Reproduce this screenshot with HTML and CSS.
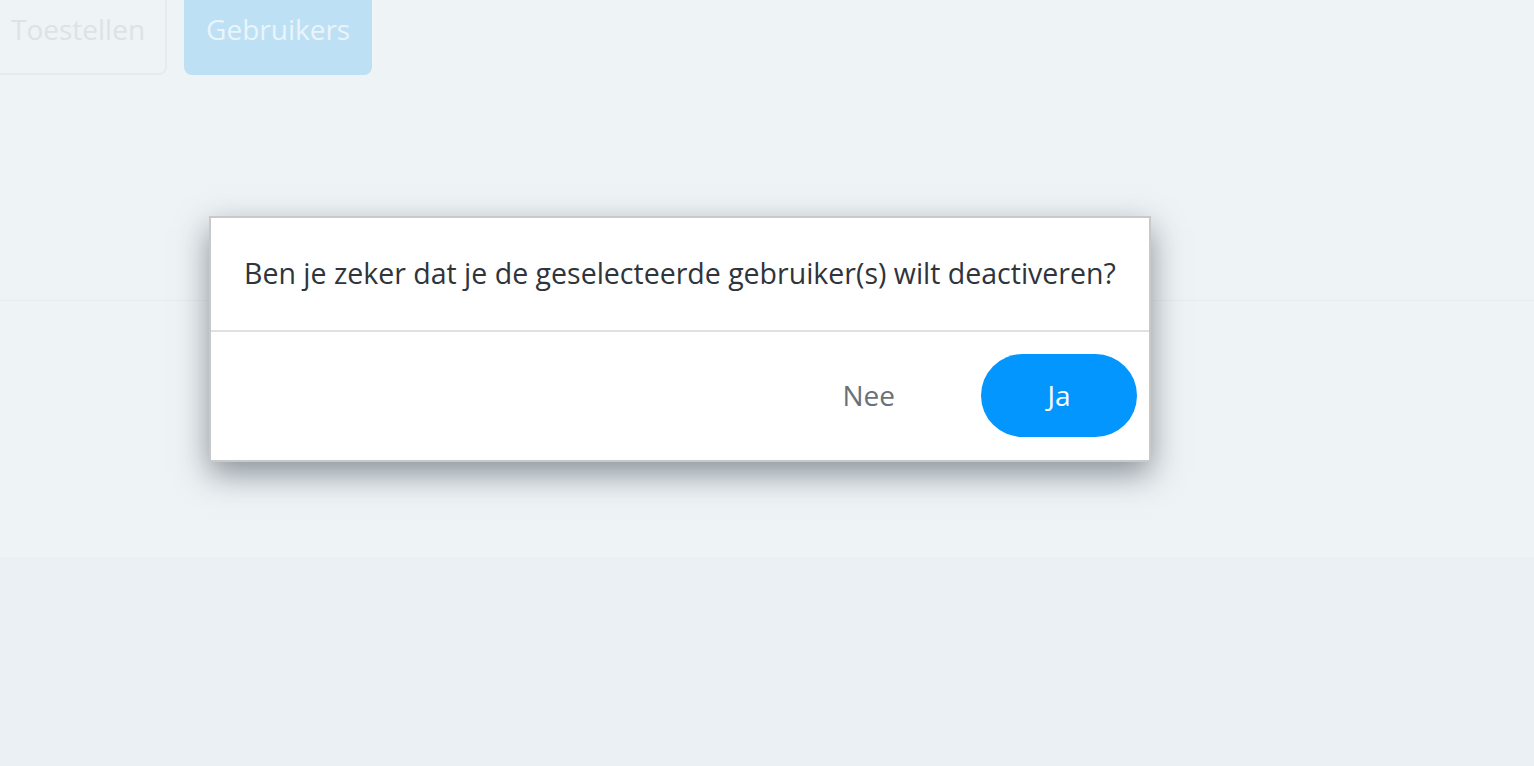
FILE: index.html
```html
<!DOCTYPE html>
<html lang="nl">
<head>
<meta charset="utf-8">
<title>Gebruikers deactiveren</title>
<link rel="stylesheet" href="styles.css">
</head>
<body>
<div class="page">
  <section class="top">
    <nav class="tabs">
      <button class="tab">Toestellen</button>
      <button class="tab tab-active">Gebruikers</button>
    </nav>
  </section>
  <section class="middle"></section>
  <section class="bottom"></section>
</div>
<div class="overlay">
  <div class="dialog" role="dialog">
    <div class="dialog-body">Ben je zeker dat je de geselecteerde gebruiker(s) wilt deactiveren?</div>
    <div class="dialog-footer">
      <button class="btn btn-no">Nee</button>
      <button class="btn btn-yes">Ja</button>
    </div>
  </div>
</div>
</body>
</html>
```
FILE: styles.css
```css
* { box-sizing: border-box; }
html, body { margin: 0; padding: 0; height: 100%; }
body {
  font-family: "Open Sans", "Noto Sans", sans-serif;
  background: #ebf0f4;
  overflow: hidden;
}
.page { display: flex; flex-direction: column; height: 100%; }
.top {
  height: 301px;
  background: #eef3f6;
  border-bottom: 1px solid #e7ecf0;
}
.tabs {
  display: flex;
  gap: 17px;
  margin-top: -7px;
  margin-left: -11px;
}
.tab {
  font-family: inherit;
  font-size: 28px;
  line-height: 38px;
  padding: 15px 20px 25px;
  border: 2px solid #e6ebef;
  border-radius: 8px;
  background: transparent;
  color: #dde2e6;
}
.tab-active {
  background: #bee0f5;
  border-color: #bee0f5;
  color: #eaf4fb;
}
.middle { height: 256px; background: #eef3f6; }
.bottom { flex: 1; background: #ebf0f4; }
.overlay { position: absolute; inset: 0; }
.dialog {
  position: absolute;
  left: 209px;
  top: 216px;
  width: 942px;
  height: 246px;
  background: #fff;
  border: 2px solid #c9c9c9;
  box-shadow: 0 12px 30px rgba(40, 50, 60, 0.5);
  display: flex;
  flex-direction: column;
}
.dialog-body {
  height: 114px;
  display: flex;
  align-items: center;
  padding-left: 33px;
  padding-bottom: 2px;
  font-size: 28.5px;
  color: #30343b;
  border-bottom: 2px solid #e0e0e0;
}
.dialog-footer {
  flex: 1;
  display: flex;
  justify-content: flex-end;
  align-items: center;
  gap: 86px;
  padding-right: 12px;
  padding-bottom: 2px;
}
.btn {
  font-family: inherit;
  font-size: 28px;
  border: 0;
  background: transparent;
  cursor: pointer;
  padding: 0;
}
.btn-no { color: #6b7079; }
.btn-yes {
  width: 156px;
  height: 83px;
  border-radius: 42px;
  background: #0396ff;
  color: #fff;
}
```
